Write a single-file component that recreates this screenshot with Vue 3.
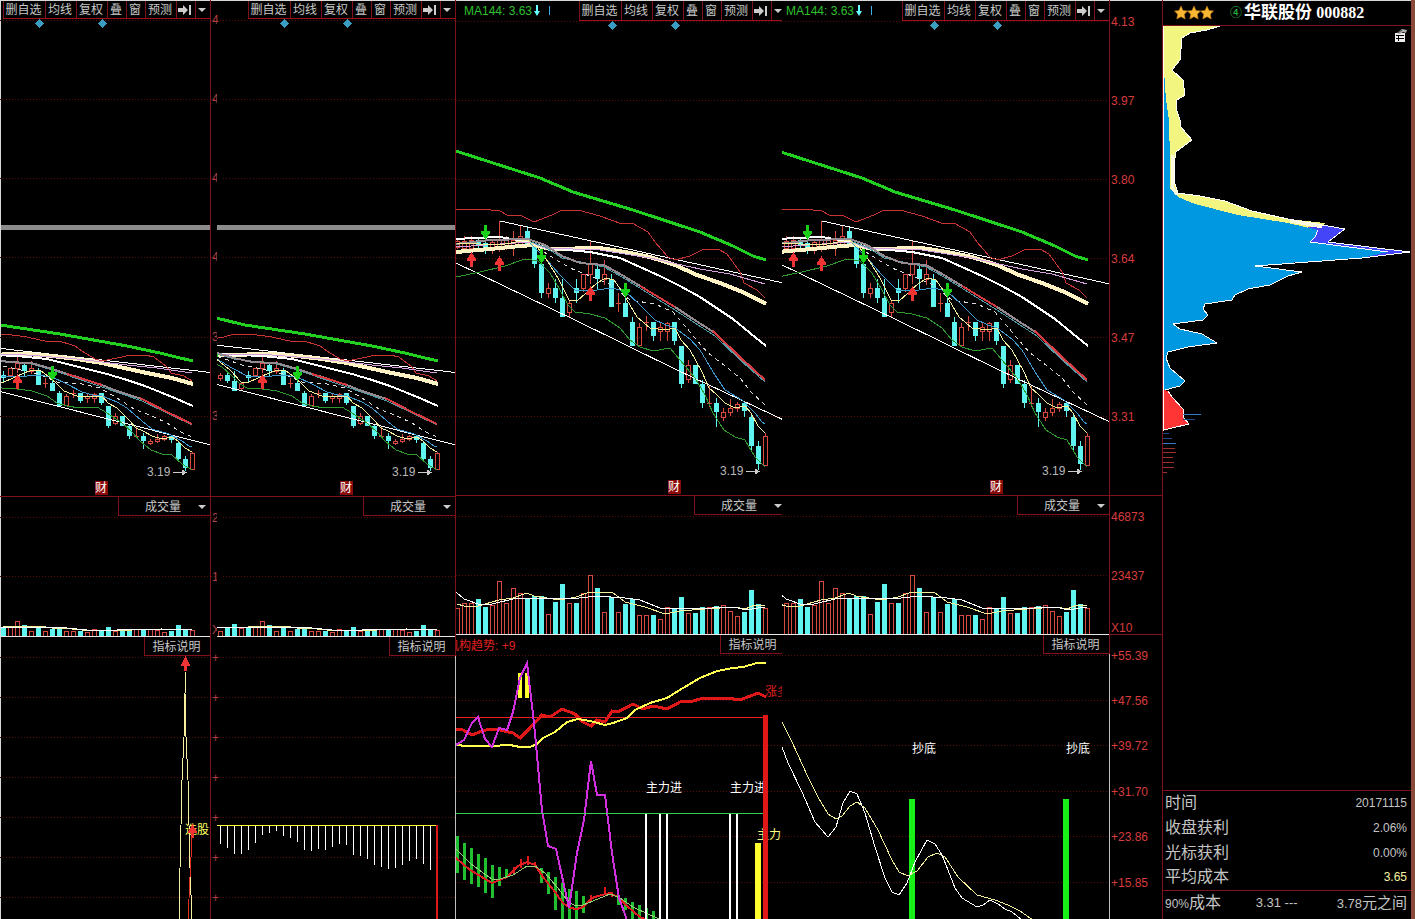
<script setup>
const tools = [
  { label: '删自选', size: 'w3' },
  { label: '均线', size: 'w2' },
  { label: '复权', size: 'w2' },
  { label: '叠', size: 'w1' },
  { label: '窗', size: 'w1' },
  { label: '预测', size: 'w2' },
]

const panes = [
  { id: 'a', cls: 'small edge', small: true, x0: 573, inset: 1, bar: true, ind: 'spike' },
  { id: 'b', cls: 'small edge light', small: true, x0: 539, inset: 6, bar: true, ind: 'comb', ticks: true },
  { id: 'c', cls: 'big cut', small: false, x0: 456, inset: 0, ma: 'MA144: 3.63', trend: true, ind: 'force' },
  { id: 'd', cls: 'big edge light', small: false, x0: 460, inset: 0, ma: 'MA144: 3.63', ind: 'bottom' },
]

// x, high, body top, body bottom, low, 1 = falling
const candles = [
  [457, 238, 241, 247, 249, 0], [464, 236, 241, 248, 250, 0], [471, 236, 240, 248, 252, 0],
  [478, 237, 240, 246, 249, 1], [485, 240, 243, 251, 254, 1], [492, 240, 242, 250, 254, 0],
  [499, 221, 240, 249, 252, 0], [506, 236, 240, 248, 250, 0], [513, 231, 240, 247, 256, 0],
  [520, 226, 236, 244, 247, 0], [527, 226, 231, 245, 247, 1], [534, 245, 247, 264, 268, 1],
  [541, 264, 264, 293, 298, 1], [548, 283, 288, 293, 298, 0], [555, 279, 288, 298, 303, 1],
  [562, 279, 298, 317, 317, 1], [569, 300, 303, 312, 317, 0], [576, 279, 288, 293, 303, 1],
  [583, 274, 274, 288, 292, 0], [590, 241, 264, 274, 284, 0], [597, 266, 269, 279, 290, 1],
  [604, 260, 274, 279, 285, 0], [611, 274, 279, 307, 307, 1], [618, 293, 303, 303, 312, 0],
  [625, 298, 303, 317, 317, 1], [632, 317, 322, 346, 346, 1], [639, 323, 327, 345, 345, 0],
  [646, 316, 322, 322, 331, 0], [653, 322, 322, 336, 341, 1], [660, 323, 327, 331, 341, 0],
  [667, 322, 323, 331, 341, 0], [674, 322, 322, 341, 345, 1], [681, 346, 346, 384, 388, 1],
  [688, 360, 365, 379, 383, 0], [695, 365, 365, 384, 384, 1], [702, 380, 384, 403, 408, 1],
  [709, 386, 403, 403, 407, 0], [716, 398, 403, 412, 427, 1], [723, 408, 412, 417, 421, 0],
  [730, 399, 408, 412, 416, 0], [737, 402, 404, 408, 412, 0], [744, 403, 403, 411, 417, 1],
  [751, 414, 417, 446, 450, 1], [758, 441, 446, 464, 470, 1], [765, 433, 436, 465, 465, 0],
]

const curves = [
  { c: 'trend', p: [[500, 221], [788, 284]] },
  { c: 'trend', p: [[456, 263], [575, 320], [677, 370], [788, 422]] },
  { c: 'band', p: [[456, 209], [482, 209], [500, 211], [507, 215], [520, 215], [534, 222], [552, 215], [562, 210], [578, 210], [600, 216], [622, 224], [632, 223], [648, 232], [655, 242], [668, 257], [675, 260], [690, 256], [704, 249], [718, 249], [727, 254], [740, 272], [744, 283], [757, 290], [765, 298]] },
  { c: 'low', p: [[456, 277], [480, 272], [505, 266], [525, 259], [538, 261], [550, 273], [560, 290], [568, 305], [575, 312], [590, 314], [605, 318], [620, 328], [630, 340], [640, 347], [653, 351], [670, 348], [680, 360], [695, 378], [705, 395], [713, 413], [724, 430], [735, 437], [745, 440], [755, 457], [765, 467]] },
  { c: 'cream', p: [[456, 252], [490, 249], [520, 246], [534, 245], [550, 249], [600, 248], [625, 252], [650, 257], [675, 265], [697, 275], [720, 283], [745, 293], [766, 304]] },
  { c: 'slow', p: [[456, 239], [475, 238], [500, 237], [530, 242], [545, 248], [590, 252], [620, 258], [640, 267], [660, 276], [680, 286], [700, 297], [718, 309], [733, 319], [750, 333], [766, 346]] },
  { c: 'pink', p: [[456, 247], [530, 242], [545, 248], [600, 250], [650, 258], [700, 269], [730, 274], [765, 284]] },
  { c: 'teal', p: [[528, 241], [545, 247], [562, 258], [604, 267], [622, 277], [675, 310], [715, 336], [740, 360], [765, 382]] },
  { c: 'grey', p: [[456, 244], [490, 240], [528, 239], [545, 245], [562, 256], [580, 263], [604, 265], [622, 275], [650, 292], [675, 307], [690, 317], [715, 333], [740, 358], [765, 380]] },
  { c: 'hot', p: [[640, 286], [675, 307]] },
  { c: 'hot', p: [[713, 331], [740, 357], [765, 380]] },
  { c: 'dash', p: [[530, 243], [550, 256], [570, 268], [590, 276], [611, 285], [630, 300], [655, 304], [673, 312], [690, 332], [707, 352], [725, 366], [740, 378], [752, 393], [765, 405]] },
  { c: 'blue', p: [[530, 243], [545, 258], [560, 275], [575, 290], [590, 291], [611, 288], [625, 291], [640, 305], [655, 320], [666, 325], [675, 328], [690, 339], [700, 350], [715, 375], [725, 390], [742, 400], [755, 413], [762, 422], [765, 424]] },
  { c: 'fast', p: [[457, 243], [500, 245], [527, 240], [538, 248], [548, 262], [558, 278], [569, 300], [577, 301], [586, 293], [597, 283], [606, 278], [614, 280], [621, 290], [630, 305], [637, 317], [650, 328], [665, 330], [675, 328], [681, 340], [690, 350], [702, 372], [709, 388], [716, 394], [725, 403], [735, 408], [745, 406], [751, 413], [758, 426], [765, 433]] },
  { c: 'ma144', p: [[456, 151], [493, 163], [540, 178], [573, 192], [633, 210], [700, 232], [733, 246], [753, 256], [766, 260]] },
]

const downs = [[485, 239], [541, 263], [625, 297]]
const ups = [[471, 253], [499, 257], [590, 287]]

// tops of the volume bars, one per candle
const volume = [608, 603, 603, 599, 607, 605, 581, 603, 588, 593, 598, 596, 596, 614, 602, 584, 603, 603, 593, 575, 588, 612, 597, 612, 604, 599, 615, 615, 615, 619, 607, 609, 597, 613, 613, 607, 607, 606, 605, 611, 616, 612, 590, 604, 608]
const volFast = [[457, 604], [464, 606], [478, 606], [499, 600], [513, 598], [527, 593], [534, 596], [560, 600], [576, 597], [590, 592], [612, 592], [625, 602], [645, 607], [665, 614], [680, 611], [705, 609], [735, 607], [745, 609], [755, 605], [765, 605]]
const volSlow = [[456, 592], [464, 599], [478, 604], [492, 604], [513, 599], [541, 598], [570, 599], [597, 596], [625, 598], [640, 600], [660, 608], [690, 609], [735, 607], [745, 610], [765, 607]]

const py = (pane, y) => (pane.small ? Math.round(y * 0.527 + 223.5) : y)
const vy = (pane, y) => (pane.small ? Math.round(141 - (634 - y) * 0.25) - 1 : y - 495)
const priceLine = (pane, p) => p.map(([x, y]) => `${x},${py(pane, y)}`).join(' ')
const volLine = (pane, p) => p.map(([x, y]) => `${x},${vy(pane, y)}`).join(' ')
const shift = (pane) => `translate(${-pane.x0 - pane.inset} 0)`

const priceGrid = (pane) => (pane.small ? [20, 99, 178, 257, 337, 416] : [21, 100, 179, 258, 337, 416])
const volGrid = [21, 80]
const indGrid = (pane) => (pane.small ? [20, 60, 100, 140, 180, 220, 260] : [20, 65, 110, 156, 201, 247])

// indicator shapes are stored on a grid three times finer than the screen
const fine = (p) => p.map(([x, y]) => `${Math.round(x / 3)},${Math.round(y / 3) + 5}`).join(' ')

const comb = [1047, 1059, 1077, 1077, 1065, 1044, 1020, 1014, 1008, 1022, 1029, 1041, 1065, 1067, 1062, 1065, 1056, 1047, 1050, 1080, 1083, 1091, 1110, 1116, 1122, 1119, 1110, 1098, 1092, 1107, 1125]
  .map((v) => Math.round(v / 3) - 142)

const force = {
  red: [[18, 267], [40, 270], [65, 285], [95, 272], [120, 268], [150, 270], [190, 278], [210, 293], [235, 270], [275, 225], [300, 230], [335, 208], [375, 222], [400, 247], [422, 257], [440, 240], [465, 247], [487, 212], [505, 217], [548, 192], [580, 207], [610, 198], [650, 206], [695, 182], [720, 187], [760, 175], [830, 175], [870, 180], [925, 160], [948, 170]],
  yellow: [[18, 315], [50, 319], [120, 317], [180, 315], [210, 321], [240, 321], [260, 312], [280, 295], [315, 275], [350, 245], [385, 236], [420, 242], [465, 255], [490, 250], [530, 235], [555, 210], [600, 188], [650, 173], [700, 145], [750, 113], [800, 92], [850, 85], [880, 80], [920, 69], [948, 69]],
  purple: [[18, 315], [42, 300], [65, 250], [84, 232], [105, 298], [127, 320], [148, 263], [170, 270], [190, 215], [210, 115], [232, 68], [252, 250], [275, 510], [295, 617], [317, 628], [358, 805], [380, 640], [402, 540], [422, 362], [442, 465], [465, 465], [485, 640], [507, 775], [530, 840]],
  dif: [[18, 655], [60, 690], [127, 730], [170, 712], [205, 678], [230, 665], [255, 675], [280, 710], [315, 757], [340, 790], [360, 805], [380, 808], [400, 800], [425, 775], [445, 768], [480, 760], [505, 770], [530, 798], [570, 830], [605, 845]],
  dea: [[18, 627], [60, 670], [100, 700], [127, 718], [150, 717], [190, 705], [230, 678], [255, 677], [285, 700], [320, 740], [350, 780], [375, 797], [400, 795], [430, 782], [480, 763], [510, 775], [550, 800], [600, 825], [650, 845]],
  green: [[21, 588, 700], [42, 610, 720], [63, 625, 732], [84, 642, 740], [105, 655, 760], [126, 675, 773], [147, 680, 738], [168, 688, 712], [273, 683, 728], [294, 695, 760], [315, 710, 810], [336, 730, 840], [357, 748, 840], [378, 752, 840], [399, 768, 818], [505, 765, 795], [526, 775, 810], [547, 785, 840], [567, 795, 840], [588, 805, 840], [609, 812, 840]],
  up: [[189, 680, 700], [210, 658, 685], [231, 648, 675], [252, 665, 680], [421, 765, 785], [461, 742, 765], [483, 755, 770]],
  white: [645, 659, 666, 729, 736],
}

const bottom = {
  yellow: [[21, 247], [50, 305], [100, 410], [130, 470], [160, 522], [182, 537], [200, 528], [225, 498], [247, 487], [270, 505], [310, 570], [350, 660], [372, 695], [400, 708], [425, 692], [460, 650], [485, 638], [510, 650], [550, 710], [605, 765], [660, 780], [700, 795], [735, 812], [773, 840]],
  white: [[21, 322], [40, 370], [80, 455], [120, 545], [160, 590], [182, 562], [205, 490], [225, 453], [245, 462], [270, 520], [300, 620], [330, 715], [350, 755], [372, 765], [395, 730], [420, 665], [455, 601], [480, 613], [500, 645], [520, 690], [540, 745], [560, 775], [605, 800], [625, 795], [645, 780], [670, 792], [690, 808], [710, 817], [740, 840]],
}

const axisPrice = [['4.13', 26], ['3.97', 105], ['3.80', 184], ['3.64', 263], ['3.47', 342], ['3.31', 421]]
const axisVol = [['46873', 26], ['23437', 85], ['X10', 137]]
const axisInd = [['+55.39', 25], ['+47.56', 70], ['+39.72', 115], ['+31.70', 161], ['+23.86', 206], ['+15.85', 252]]

const chipTicks = [
  [20, 414, 38, 'b'], [20, 419, 32, 'n'], [0, 433, 6, 'n'], [0, 438, 9, 'n'], [0, 443, 13, 'b'],
  [0, 448, 12, 'r'], [0, 452, 13, 'r'], [0, 457, 10, 'r'], [0, 462, 11, 'r'], [0, 467, 11, 'r'], [0, 472, 4, 'r'],
]
const stats = [
  { k: '时间', v: '20171115' },
  { k: '收盘获利', v: '2.06%' },
  { k: '光标获利', v: '0.00%' },
  { k: '平均成本', v: '3.65', hot: true },
]
</script>

<template>
  <main class="desk">
    <section v-for="p in panes" :key="p.id" class="pane" :class="p.cls">
      <div class="price layer">
        <svg class="chart" aria-hidden="true">
          <line v-for="y in priceGrid(p)" :key="y" class="grid" x1="0" x2="100%" :y1="y + 0.5" :y2="y + 0.5" />
          <g v-if="p.ticks" class="tick">
            <text v-for="(y, i) in priceGrid(p)" :key="y" x="1" :y="y + 4">{{ i < 4 ? 4 : 3 }}</text>
          </g>
          <rect v-if="p.ticks" class="cover" x="6" y="22" width="4" height="470" />
          <svg :x="p.inset" width="100%" height="100%">
            <rect v-if="p.bar" class="slab" x="0" y="225" width="100%" height="5" />
            <g :transform="shift(p)">
              <g v-for="k in candles" :key="k[0]" :class="k[5] ? 'fall' : 'rise'">
                <line :x1="k[0] + 0.5" :x2="k[0] + 0.5" :y1="py(p, k[1])" :y2="py(p, k[2])" />
                <line :x1="k[0] + 0.5" :x2="k[0] + 0.5" :y1="py(p, k[3])" :y2="py(p, k[4])" />
                <line v-if="k[2] === k[3]" :x1="k[0] - 2" :x2="k[0] + 3" :y1="py(p, k[2]) + 0.5" :y2="py(p, k[2]) + 0.5" />
                <rect v-else-if="k[5]" :x="k[0] - 2" :y="py(p, k[2])" width="5" :height="py(p, k[3]) - py(p, k[2])" />
                <rect v-else :x="k[0] - 1.5" :y="py(p, k[2]) + 0.5" width="4" :height="py(p, k[3]) - py(p, k[2])" />
              </g>
              <polyline v-for="(l, i) in curves" :key="i" :class="l.c" :points="priceLine(p, l.p)" />
              <path v-for="d in downs" :key="'d' + d[0]" class="down" :transform="`translate(${d[0]} ${py(p, d[1])})`" d="M0.5 1L-4 -6V-8H-1V-14H2V-8H5V-6Z" />
              <path v-for="u in ups" :key="'u' + u[0]" class="up" :transform="`translate(${u[0]} ${py(p, u[1])})`" d="M0.5 -1L-4 6V8H-1V14H2V8H5V6Z" />
              <g :transform="`translate(0 ${p.small ? 1 : 0})`">
                <text class="note" x="720" y="475">3.19</text>
                <path class="pointer" d="M746 471.5H756M755 469V474L759 471.5Z" />
                <rect class="badge" x="668" y="480" width="13" height="14" />
                <text class="badge-text" x="668" y="491">财</text>
              </g>
              <g :transform="`translate(0 ${p.small ? 23 : 25})`" class="gem">
                <path d="M612.5 -4L617 0.5L612.5 5L608 0.5Z" />
                <path d="M675.5 -4L680 0.5L675.5 5L671 0.5Z" />
              </g>
            </g>
          </svg>
        </svg>
        <header class="bar">
          <p v-if="p.ma" class="ma">
            {{ p.ma }}
            <svg width="20" height="12" aria-hidden="true">
              <path d="M2 0H4V6H6L3 11L0 6H2Z" fill="#6ff" />
              <path d="M15 1H16V10H15Z" fill="#3ab0e8" />
            </svg>
          </p>
          <nav class="tools" aria-label="图表工具">
            <button v-for="t in tools" :key="t.label" type="button" :class="t.size">{{ t.label }}</button>
            <button type="button" class="w1" aria-label="跳到最新">
              <svg width="14" height="12" aria-hidden="true"><path d="M0 4H5V1L10 6L5 11V8H0ZM11 1H13V11H11Z" fill="#ccc" /></svg>
            </button>
            <button type="button" class="w0" aria-label="更多">
              <svg width="8" height="4" aria-hidden="true"><path d="M0 0H8L4 4Z" fill="#ccc" /></svg>
            </button>
          </nav>
        </header>
      </div>

      <div class="volume layer">
        <svg class="chart" aria-hidden="true">
          <line class="rule" x1="0" x2="100%" y1="0.5" y2="0.5" />
          <line v-for="y in volGrid" :key="y" class="grid" x1="0" x2="100%" :y1="y + 0.5" :y2="y + 0.5" />
          <g v-if="p.ticks" class="tick">
            <text x="1" y="26">2</text>
            <text x="1" y="85">1</text>
            <text x="1" y="138">X</text>
          </g>
          <rect v-if="p.ticks" class="cover" x="6" y="8" width="4" height="132" />
          <svg :x="p.inset" width="100%" height="100%">
            <g :transform="shift(p)">
              <g v-for="(v, i) in volume" :key="i" :class="candles[i][5] ? 'fall' : 'rise'">
                <rect v-if="candles[i][5]" :x="candles[i][0] - 2" :y="vy(p, v)" width="5" :height="vy(p, 634) - vy(p, v)" />
                <rect v-else :x="candles[i][0] - 1.5" :y="vy(p, v) + 0.5" width="4" :height="vy(p, 634) - vy(p, v)" />
              </g>
              <polyline class="fast" :points="volLine(p, volFast)" />
              <polyline class="trend" :points="volLine(p, volSlow)" />
            </g>
            <rect class="base" x="0" :y="vy(p, 634)" width="100%" height="1" />
          </svg>
        </svg>
        <header class="bar">
          <button type="button" class="pick">
            <span>成交量</span>
            <svg width="8" height="4" aria-hidden="true"><path d="M0 0H8L4 4Z" fill="#ccc" /></svg>
          </button>
        </header>
      </div>

      <div class="indicator layer">
        <svg class="chart" aria-hidden="true">
          <line v-for="y in indGrid(p)" :key="y" class="grid" x1="0" x2="100%" :y1="y + 0.5" :y2="y + 0.5" />
          <g v-if="p.ticks" class="tick">
            <text v-for="y in indGrid(p)" :key="y" x="1" :y="y + 5">+</text>
          </g>

          <g v-if="p.ind === 'spike'">
            <polyline class="spike" points="185,35 185,56 184,100 182,143 181,188 180,231 179,284" />
            <polyline class="spike" points="185,56 186,100 188,143 189,188 190,231 192,284" />
            <polyline class="hotline" points="192,201 190,240 188,284" />
            <text class="pickup" x="185" y="197">选股:</text>
            <path class="up" d="M185.5 19L181 28V29H184V34H187V29H190V28Z" />
            <path class="up" d="M192.5 187L188 195V196H191V201H194V196H197V195Z" />
          </g>

          <g v-else-if="p.ind === 'comb'">
            <rect v-for="(h, i) in comb" :key="i" class="tooth" :x="9 + i * 7" y="188" width="1" :height="h - 188" />
            <rect class="lemon" x="6" y="188" width="220" height="1" />
            <rect class="ruby" x="225" y="188" width="2" height="200" />
          </g>

          <svg v-else-if="p.ind === 'force'" width="100%" height="100%">
            <g transform="translate(-6 0)">
              <rect class="lemon" x="68" y="38" width="4" height="25" />
              <rect class="lemon" x="75" y="38" width="4" height="25" />
              <line class="rose" x1="0" x2="318" y1="82.5" y2="82.5" />
              <g>
                <rect v-for="g in force.green" :key="g[0]" class="leaf" :x="Math.round(g[0] / 3) - 1" :y="Math.round(g[1] / 3) + 5" width="3" :height="Math.round((g[2] - g[1]) / 3)" />
                <rect v-for="g in force.up" :key="g[0]" class="ruby" :x="Math.round(g[0] / 3)" :y="Math.round(g[1] / 3) + 5" width="2" :height="Math.round((g[2] - g[1]) / 3)" />
              </g>
              <polyline class="dif" :points="fine(force.dif)" />
              <polyline class="dea" :points="fine(force.dea)" />
              <polyline class="thick-red" :points="fine(force.red)" />
              <polyline class="thick-yellow" :points="fine(force.yellow)" />
              <polyline class="purple" :points="fine(force.purple)" />
              <rect v-for="x in force.white" :key="x" class="tooth" :x="x - 450" y="179" width="2" height="400" />
              <line class="mint" x1="0" x2="316" y1="178.5" y2="178.5" />
              <text class="label" x="196" y="157">主力进</text>
              <text class="label" x="280" y="157">主力进</text>
              <text class="rise-text" x="315" y="61">涨多</text>
              <text class="label warm" x="307" y="204">主力</text>
              <rect class="lemon" x="305" y="208" width="6" height="400" />
              <rect class="ruby" x="313" y="80" width="5" height="500" />
            </g>
          </svg>

          <g v-else transform="translate(-7 0)">
            <rect class="lime" x="134" y="164" width="6" height="500" />
            <rect class="lime" x="288" y="164" width="6" height="500" />
            <polyline class="fast" :points="fine(bottom.yellow)" />
            <polyline class="trend" :points="fine(bottom.white)" />
            <text class="label" x="137" y="118">抄底</text>
            <text class="label" x="291" y="118">抄底</text>
          </g>
        </svg>
        <header class="bar">
          <p v-if="p.trend" class="force-name">机构趋势: +9</p>
          <button type="button" class="help">指标说明</button>
        </header>
      </div>
    </section>

    <section class="axis big">
      <svg class="chart"><text v-for="a in axisPrice" :key="a[0]" x="1" :y="a[1]">{{ a[0] }}</text></svg>
      <svg class="chart">
        <line class="rule" x1="0" x2="100%" y1="0.5" y2="0.5" />
        <line class="rule" x1="0" x2="100%" y1="139.5" y2="139.5" />
        <text v-for="a in axisVol" :key="a[0]" x="1" :y="a[1]">{{ a[0] }}</text>
      </svg>
      <svg class="chart"><text v-for="a in axisInd" :key="a[0]" x="1" :y="a[1]">{{ a[0] }}</text></svg>
    </section>

    <aside class="side">
      <header class="title">
        <svg class="stars" width="40" height="14" aria-hidden="true">
          <path v-for="n in 3" :key="n" :transform="`translate(${(n - 1) * 13} 0)`" d="M7 0L9 4.5L13.5 5L10.3 8.2L11.2 13L7 10.7L2.8 13L3.7 8.2L0.5 5L5 4.5Z" fill="#f7b733" stroke="#c77a12" stroke-width="0.6" />
        </svg>
        <span class="mark">④</span>
        <h1>华联股份 <b>000882</b></h1>
      </header>
      <div class="chips layer">
        <svg class="chart" aria-hidden="true">
          <g transform="translate(-1163 -26)">
            <path class="c-yellow" d="M1163 26H1220L1207 30L1190 33L1182 38L1181 50L1180 60L1172 70L1183 80L1185 95L1177 100L1176 108L1180 120L1181 127L1186 133L1192 140L1184 146L1176 152L1174 165L1175 184L1178 193L1200 196L1225 201L1252 211L1288 219L1325 223L1318 230H1163Z" />
            <path class="c-violet" d="M1318 224L1345 229L1337 235L1328 242L1410 252L1370 257H1300V230Z" />
            <path class="c-blue" d="M1163 70H1164L1166 100L1169 120L1170 160V189L1178 197L1195 204L1238 215L1288 223L1318 230L1315 237L1310 242L1388 252L1362 258L1300 262L1255 266L1302 272L1288 276L1270 285L1248 289L1235 295L1232 300L1205 304L1203 309L1208 315L1203 320L1173 324L1180 329L1202 334L1217 343L1188 347L1168 352L1166 358L1170 368L1185 381L1180 386L1165 390H1163Z" />
            <path class="c-line" d="M1220 26L1207 30L1190 33L1182 38L1180 60L1172 70L1183 80L1185 95L1177 100L1176 108L1180 120L1181 127L1186 133L1192 140L1184 146L1176 152L1174 165L1175 184L1178 193L1200 196L1225 201L1252 211L1288 219L1345 229L1337 235L1328 242L1410 252L1362 258L1255 266L1302 272L1288 276L1270 285L1248 289L1235 295L1232 300L1205 304L1203 309L1208 315L1203 320L1173 324L1180 329L1202 334L1217 343L1188 347L1168 352L1166 358L1170 368L1185 381L1180 386L1165 390" />
            <path class="c-cream" d="M1172 155V187L1177 195" />
            <path class="c-cream" d="M1290 221L1322 227" />
            <path class="c-line" d="M1318 230L1315 237L1310 242L1388 252" />
            <path class="c-red" d="M1163 390L1168 391L1172 397L1183 409V417L1189 424L1163 430Z" />
            <path class="c-line" d="M1163.5 26V430L1189 424L1183 417V409L1172 397L1168 391" />
            <rect v-for="t in chipTicks" :key="t[1]" :class="'t-' + t[3]" :x="1163 + t[0]" :y="t[1]" :width="t[2] - t[0]" height="1" />
          </g>
        </svg>
        <button type="button" class="prop" aria-label="属性">
          <svg width="14" height="14" aria-hidden="true">
            <path d="M1 5H11V14H1Z" fill="#eee" />
            <path d="M2 7.5H10M2 10.5H10M4.5 8V13" stroke="#000" fill="none" />
            <path d="M3 5L8 1L13 2L12 5L9 4L6 6Z" fill="#aaa" />
            <path d="M4 5L8 2" stroke="#444" />
          </svg>
        </button>
      </div>
      <table class="stats">
        <tbody>
          <tr v-for="s in stats" :key="s.k">
            <th scope="row">{{ s.k }}</th>
            <td colspan="2" :class="{ hot: s.hot }">{{ s.v }}</td>
          </tr>
          <tr class="range">
            <th scope="row"><small>90%</small>成本</th>
            <td class="from">3.31 ---</td>
            <td>3.78<span>元之间</span></td>
          </tr>
        </tbody>
      </table>
    </aside>
  </main>
</template>

<style>
body {
  background: #000;
}
</style>

<style scoped>
.desk {
  display: grid;
  grid-template-columns: minmax(0, 211fr) minmax(0, 245fr) minmax(0, 326fr) minmax(0, 328fr) minmax(0, 53fr) minmax(0, 252fr);
  min-height: 100vh;
  background: #000;
  box-shadow: inset 1px 1px 0 #d8d8d8;
  color: #c8c8c8;
  font: 12px/14px "Liberation Sans", "Noto Sans CJK SC", sans-serif;
}
p, h1 { margin: 0; }
button {
  margin: 0;
  padding: 0;
  border: 0;
  background: #000;
  color: inherit;
  font: inherit;
}
.pane, .axis { display: grid; min-width: 0; overflow: hidden; }
.small { grid-template-rows: 496px 141px minmax(282px, 1fr); }
.big { grid-template-rows: 495px 140px minmax(284px, 1fr); }
.layer { display: grid; min-width: 0; min-height: 0; grid-template-columns: minmax(0, 1fr); grid-template-rows: minmax(0, 1fr); }
.layer > * { grid-area: 1 / 1; }
.edge .layer { border-right: 1px solid #80101a; }
.light .indicator { border-image: linear-gradient(to bottom, #80101a 20px, #c0c0c0 20px) 1; border-width: 0 1px 0 0; }
.chart { display: block; width: 100%; height: 100%; overflow: hidden; shape-rendering: crispEdges; }

.bar { display: flex; align-self: start; justify-content: flex-end; min-width: 0; z-index: 1; }
.cut .bar { margin-right: -4px; }
.ma { flex: 1; display: flex; align-items: center; gap: 2px; padding: 0 0 0 4px; color: #2fc02f; white-space: nowrap; }
.cut .ma { padding-left: 8px; }
.tools { display: flex; margin-top: 1px; border-bottom: 1px solid #a01018; }
.tools button { display: flex; align-items: center; justify-content: center; height: 17px; padding-right: 2px; border-left: 1px solid #80101a; box-sizing: border-box; white-space: nowrap; }
.big .tools button { height: 19px; }
.w3 { width: 42px; }
.w2 { width: 31px; }
.w1 { width: 19px; }
.w0 { width: 15px; }
.pick { display: flex; align-items: center; justify-content: flex-end; gap: 17px; width: 92px; height: 20px; padding: 2px 4px 0 0; box-sizing: border-box; border: solid #80101a; border-width: 1px 0 1px 1px; }
.help { width: 66px; height: 19px; padding: 2px 2px 0 0; box-sizing: border-box; border: solid #80101a; border-width: 0 0 1px 1px; white-space: nowrap; }
.force-name { flex: 1; margin-left: -9px; padding-top: 4px; color: #e02020; white-space: nowrap; }

.grid { stroke: #5a0c0c; stroke-dasharray: 1 2; }
.rule { stroke: #80101a; }
.tick text { fill: #b04040; }
.cover { fill: #000; }
.slab { fill: #8c8c8c; }
.rise line, .rise rect { stroke: #d84a40; fill: none; }
.fall line { stroke: #5ff4f0; }
.fall rect { fill: #5ff4f0; }
polyline { fill: none; stroke-width: 1; }
.trend { stroke: #fff; }
.band { stroke: #c83434; }
.low { stroke: #2f9a30; }
.cream { stroke: #fff3c4; stroke-width: 4; }
.slow { stroke: #fff; stroke-width: 2; }
.pink { stroke: #d9a0e0; }
.teal { stroke: #4a9aa8; }
.grey { stroke: #948a90; stroke-width: 2; }
.hot { stroke: #d83a40; stroke-width: 2; }
.dash { stroke: #ddd; stroke-dasharray: 4 4; }
.blue { stroke: #3f9ad0; }
.fast { stroke: #f3ef9a; }
.ma144 { stroke: #22d022; stroke-width: 3; }
.down { fill: #18d018; }
.up { fill: #f03434; }
.note { fill: #b8b8b8; }
.pointer { stroke: #ccc; fill: #ccc; }
.badge { fill: #8a0a0a; }
.badge-text { fill: #fff; }
.gem { fill: #3a9cc0; }
.base { fill: #e8e8e8; }

.spike { stroke: #f6f0a0; }
.hotline { stroke: #e03020; }
.pickup { fill: #ffff60; }
.tooth { fill: #fff; }
.lemon { fill: #ffff30; }
.ruby { fill: #e01818; }
.rose { stroke: #f02020; }
.leaf { fill: #20c030; }
.mint { stroke: #30d050; }
.lime { fill: #18f018; }
.dif { stroke: #e02020; stroke-width: 2; }
.dea { stroke: #90d070; }
.thick-red { stroke: #e01818; stroke-width: 3; }
.thick-yellow { stroke: #ffff50; stroke-width: 2; }
.purple { stroke: #d030e0; stroke-width: 2; }
.label { fill: #fff; }
.warm { fill: #ffff80; }
.rise-text { fill: #e02020; }

.axis { border-right: 1px solid #80101a; }
.axis text { fill: #d83c3c; }

.side {
  display: grid;
  grid-template-rows: 25px 1fr auto;
  min-width: 0;
  padding-top: 1px;
  border-right: 4px solid #8a4a3a;
}
.title { display: flex; align-items: center; border-bottom: 1px solid #80101a; box-sizing: border-box; height: 25px; padding-left: 11px; white-space: nowrap; }
.mark { margin: 0 2px 0 16px; color: #30c040; }
h1 { color: #fff; font: bold 17px/24px "Liberation Serif", "Noto Sans CJK SC", serif; }
h1 b { font-size: 16px; }
.prop { align-self: start; justify-self: end; margin: 2px 3px; z-index: 1; background: none; }
.c-yellow { fill: #f2f580; }
.c-violet { fill: #4444f8; }
.c-blue { fill: #0098e0; }
.c-red { fill: #ff3434; }
.c-line { fill: none; stroke: #fff; }
.c-cream { fill: none; stroke: #fffbe0; stroke-width: 3; }
.t-b { fill: #3a78c8; }
.t-n { fill: #1c4a88; }
.t-r { fill: #a03030; }

.stats { width: 100%; margin-bottom: 3px; border-collapse: collapse; border-top: 1px solid #80101a; color: #c4c4c4; line-height: 20px; }
.stats tr { height: 25px; }
.stats th { padding: 0 0 0 2px; font-weight: normal; font-size: 16px; text-align: left; white-space: nowrap; }
.stats small { font-size: 12px; }
.stats td { padding: 0 4px 0 0; text-align: right; white-space: nowrap; }
.stats .hot { color: #f4f4a0; }
.stats span { font-size: 15px; }
.stats .range { height: 26px; border-top: 1px solid #80101a; }
.range td { font-size: 13px; }
.range .from { padding-right: 24px; }
</style>
